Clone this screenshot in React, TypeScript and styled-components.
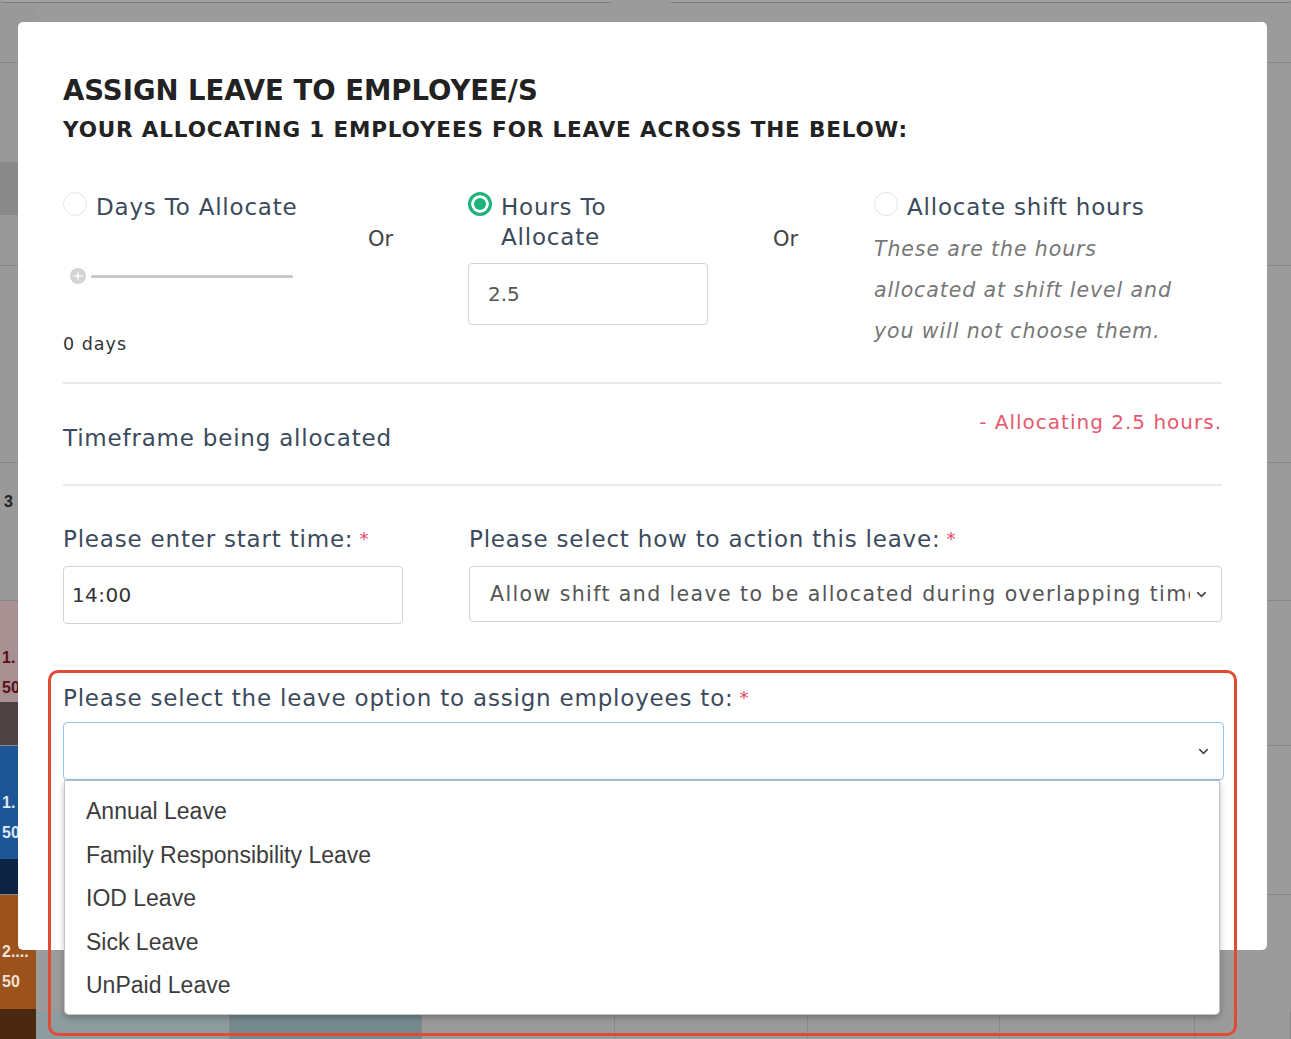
import styled, { createGlobalStyle } from "styled-components";
import { ChevronDown } from "lucide-react";

const GlobalStyle = createGlobalStyle`
  html, body {
    margin: 0;
    padding: 0;
    background: #9a9a9a;
  }
  * {
    box-sizing: border-box;
  }
`;

const Page = styled.div`
  position: relative;
  width: 1291px;
  height: 1039px;
  overflow: hidden;
  background: #9a9a9a;
  font-family: "DejaVu Sans", "Noto Sans", sans-serif;
`;

/* ---------- dimmed calendar behind the modal ---------- */

const Calendar = styled.div`
  display: flex;
  flex-direction: column;
  height: 100%;
`;

const TopBar = styled.div`
  display: flex;
  gap: 58px;
  height: 6px;
`;

const TopBox = styled.div<{ grow?: boolean }>`
  flex: ${({ grow }) => (grow ? 1 : "0 0 612px")};
  background: #a2a2a2;
  border-bottom: 1px solid #7c7c7c;
  border-radius: 0 0 6px 6px;
`;

const Band = styled.div<{ h: number; line?: boolean }>`
  display: flex;
  height: ${({ h }) => h}px;
  flex: 0 0 auto;
  border-top: ${({ line }) => (line ? "1px solid #868686" : "none")};
`;

const SideCell = styled.div<{ bg?: string; fg?: string }>`
  width: 36px;
  flex: 0 0 36px;
  background: ${({ bg }) => bg || "#999"};
  color: ${({ fg }) => fg || "#222"};
  font-family: "Liberation Sans", Arial, sans-serif;
  font-weight: bold;
  font-size: 16px;
  line-height: 30px;
  padding: ${({ fg }) => (fg ? "42px 0 0 2px" : "24px 0 0 4px")};
  overflow: hidden;
  white-space: nowrap;
`;

const BandBody = styled.div`
  flex: 1;
  background: #9b9b9b;
`;

const DayRow = styled.div`
  flex: 1;
  display: grid;
  grid-template-columns: 194px 192px 193px 193px 192px 195px 1fr;
  margin-top: 3px;
`;

const DayCell = styled.div<{ bg?: string }>`
  background: ${({ bg }) => bg || "#9b9b9b"};
  border-right: 1px solid #898989;
`;

/* ---------- modal ---------- */

const Modal = styled.div`
  position: absolute;
  top: 22px;
  left: 18px;
  width: 1249px;
  height: 928px;
  background: #fff;
  border-radius: 5px;
  padding: 52px 45px 0 45px;
  color: #3b4a5c;
`;

const Title = styled.h1`
  margin: 0;
  font-size: 27.5px;
  line-height: 32px;
  font-weight: bold;
  color: #222;
`;

const SubTitle = styled.h2`
  margin: 11px 0 0;
  font-size: 21.5px;
  line-height: 26px;
  font-weight: bold;
  letter-spacing: 0.85px;
  color: #222;
`;

const OptionsGrid = styled.div`
  display: grid;
  grid-template-columns: 305px 100px 305px 101px 1fr;
  margin-top: 49px;
  height: 190px;
`;

const OptionCol = styled.div`
  display: flex;
  flex-direction: column;
`;

const RadioLabel = styled.div`
  display: flex;
  align-items: flex-start;
  gap: 9px;
  font-size: 23px;
  line-height: 30px;
  letter-spacing: 0.8px;
  color: #3b4a5c;
`;

const Radio = styled.span<{ checked?: boolean }>`
  flex: 0 0 auto;
  width: 24px;
  height: 24px;
  border-radius: 50%;
  border: ${({ checked }) => (checked ? "3px solid #1db47c" : "1px solid #dfe4ea")};
  background: ${({ checked }) => (checked ? "#1db47c" : "#fff")};
  box-shadow: ${({ checked }) => (checked ? "inset 0 0 0 3px #fff" : "none")};
`;

const OrText = styled.div`
  font-size: 21px;
  color: #444;
  padding-top: 35px;
`;

const SliderRow = styled.div`
  display: flex;
  align-items: center;
  margin-top: 45px;
  padding-left: 6px;
  gap: 4px;
`;

const SliderTrack = styled.div`
  width: 202px;
  height: 3px;
  background: #c9c9c9;
  border-radius: 2px;
`;

const DaysValue = styled.div`
  margin-top: 49px;
  font-size: 17.5px;
  letter-spacing: 1px;
  color: #333;
`;

const HoursInput = styled.div`
  margin-top: 11px;
  width: 240px;
  height: 62px;
  border: 1px solid #cfd4d9;
  border-radius: 4px;
  font-size: 20px;
  color: #555;
  padding: 0 19px;
  display: flex;
  align-items: center;
`;

const ShiftNote = styled.div`
  margin-top: 7px;
  font-size: 20.5px;
  line-height: 41px;
  font-style: italic;
  color: #777;
  letter-spacing: 0.9px;
`;

const Divider = styled.hr`
  margin: 0;
  border: none;
  border-top: 2px solid #e9e9e9;
`;

const TimeframeRow = styled.div`
  display: flex;
  justify-content: space-between;
  height: 100px;
`;

const TimeframeLabel = styled.div`
  font-size: 23px;
  line-height: 30px;
  letter-spacing: 0.8px;
  padding-top: 39px;
`;

const AllocatingNote = styled.div`
  font-size: 20px;
  line-height: 28px;
  letter-spacing: 1px;
  color: #e8576d;
  padding-top: 24px;
`;

const FieldsGrid = styled.div`
  display: grid;
  grid-template-columns: 340px 753px;
  column-gap: 66px;
  margin-top: 38px;
`;

const Field = styled.div`
  display: flex;
  flex-direction: column;
`;

const FieldLabel = styled.label`
  font-size: 23px;
  line-height: 30px;
  letter-spacing: 0.8px;
  color: #3b4a5c;
  white-space: nowrap;
`;

const Required = styled.span`
  color: #e8465d;
  font-size: 18px;
  vertical-align: top;
  margin-left: 6px;
`;

const TextBox = styled.div<{ h?: number; focus?: boolean }>`
  margin-top: ${({ focus }) => (focus ? 9 : 12)}px;
  height: ${({ h }) => h || 58}px;
  border: 1px solid ${({ focus }) => (focus ? "#8fc3f3" : "#cfd4d9")};
  border-radius: 4px;
  display: flex;
  align-items: center;
  padding: 0 12px 0 8px;
  font-size: 20px;
  letter-spacing: 0.4px;
  color: #333;
  background: #fff;
`;

const SelectBox = styled(TextBox)`
  padding: 0 12px 0 20px;
  font-size: 20.5px;
  letter-spacing: 1.4px;
  color: #555;
  gap: 4px;
`;

const SelectValue = styled.span`
  flex: 1;
  white-space: nowrap;
  overflow: hidden;
`;

const Highlight = styled.div`
  margin: 46px -15px 0 -15px;
  height: 366px;
  border: 3px solid #e04b36;
  border-radius: 10px;
  padding: 10px 10px 0 12px;
`;

const Menu = styled.ul`
  list-style: none;
  margin: 0 4px 0 1px;
  padding: 9px 0 6px;
  background: #fff;
  border: 1px solid #c4c4c4;
  border-top-color: #bbb;
  border-radius: 0 0 5px 5px;
  box-shadow: 0 3px 6px rgba(0, 0, 0, 0.25);
`;

const MenuItem = styled.li`
  font-family: "Liberation Sans", Arial, sans-serif;
  font-size: 23px;
  line-height: 43.5px;
  color: #3c3c3c;
  padding-left: 21px;
`;

const SliderThumb = () => (
  <svg width="18" height="18" viewBox="0 0 18 18">
    <circle cx="9" cy="9" r="8" fill="#d4d4d4" />
    <path d="M9 3.5 L10 8 L14.5 9 L10 10 L9 14.5 L8 10 L3.5 9 L8 8 Z" fill="#fff" />
  </svg>
);

const leaveOptions = [
  "Annual Leave",
  "Family Responsibility Leave",
  "IOD Leave",
  "Sick Leave",
  "UnPaid Leave",
];

export default function App() {
  return (
    <Page>
      <GlobalStyle />
      <Calendar>
        <TopBar>
          <TopBox />
          <TopBox grow />
        </TopBar>
        <Band h={59}>
          <SideCell />
          <BandBody />
        </Band>
        <Band h={100} line>
          <SideCell />
          <BandBody />
        </Band>
        <Band h={53}>
          <SideCell bg="#8a8a8a" />
          <BandBody />
        </Band>
        <Band h={50}>
          <SideCell />
          <BandBody />
        </Band>
        <Band h={197} line>
          <SideCell />
          <BandBody />
        </Band>
        <Band h={138} line>
          <SideCell>3</SideCell>
          <BandBody />
        </Band>
        <Band h={102} line>
          <SideCell bg="#a99193" fg="#5a0d1a">
            1.
            <br />
            50
          </SideCell>
          <BandBody />
        </Band>
        <Band h={43}>
          <SideCell bg="#4d4242" />
          <BandBody />
        </Band>
        <Band h={114} line>
          <SideCell bg="#1d5596" fg="#dfe8f3">
            1.
            <br />
            50
          </SideCell>
          <BandBody />
        </Band>
        <Band h={35}>
          <SideCell bg="#0c2343" />
          <BandBody />
        </Band>
        <Band h={115} line>
          <SideCell bg="#9b521d" fg="#f1e2d6">
            2....
            <br />
            50
          </SideCell>
          <BandBody />
        </Band>
        <Band h={30}>
          <SideCell bg="#4b2810" />
          <DayRow>
            <DayCell bg="#8d9c9e" />
            <DayCell bg="#758a8f" />
            <DayCell />
            <DayCell />
            <DayCell />
            <DayCell />
            <DayCell />
          </DayRow>
        </Band>
      </Calendar>

      <Modal>
        <Title>ASSIGN LEAVE TO EMPLOYEE/S</Title>
        <SubTitle>YOUR ALLOCATING 1 EMPLOYEES FOR LEAVE ACROSS THE BELOW:</SubTitle>

        <OptionsGrid>
          <OptionCol>
            <RadioLabel>
              <Radio />
              Days To Allocate
            </RadioLabel>
            <SliderRow>
              <SliderThumb />
              <SliderTrack />
            </SliderRow>
            <DaysValue>0 days</DaysValue>
          </OptionCol>
          <OrText>Or</OrText>
          <OptionCol>
            <RadioLabel>
              <Radio checked />
              <span>
                Hours To
                <br />
                Allocate
              </span>
            </RadioLabel>
            <HoursInput>2.5</HoursInput>
          </OptionCol>
          <OrText>Or</OrText>
          <OptionCol>
            <RadioLabel>
              <Radio />
              Allocate shift hours
            </RadioLabel>
            <ShiftNote>
              These are the hours
              <br />
              allocated at shift level and
              <br />
              you will not choose them.
            </ShiftNote>
          </OptionCol>
        </OptionsGrid>

        <Divider />
        <TimeframeRow>
          <TimeframeLabel>Timeframe being allocated</TimeframeLabel>
          <AllocatingNote>- Allocating 2.5 hours.</AllocatingNote>
        </TimeframeRow>
        <Divider />

        <FieldsGrid>
          <Field>
            <FieldLabel>
              Please enter start time:<Required>*</Required>
            </FieldLabel>
            <TextBox>14:00</TextBox>
          </Field>
          <Field>
            <FieldLabel>
              Please select how to action this leave:<Required>*</Required>
            </FieldLabel>
            <SelectBox h={56}>
              <SelectValue>Allow shift and leave to be allocated during overlapping time</SelectValue>
              <ChevronDown size={15} strokeWidth={2.5} color="#444" />
            </SelectBox>
          </Field>
        </FieldsGrid>

        <Highlight>
          <FieldLabel>
            Please select the leave option to assign employees to:<Required>*</Required>
          </FieldLabel>
          <SelectBox focus>
            <SelectValue />
            <ChevronDown size={15} strokeWidth={2.5} color="#444" />
          </SelectBox>
          <Menu>
            {leaveOptions.map((o) => (
              <MenuItem key={o}>{o}</MenuItem>
            ))}
          </Menu>
        </Highlight>
      </Modal>
    </Page>
  );
}
